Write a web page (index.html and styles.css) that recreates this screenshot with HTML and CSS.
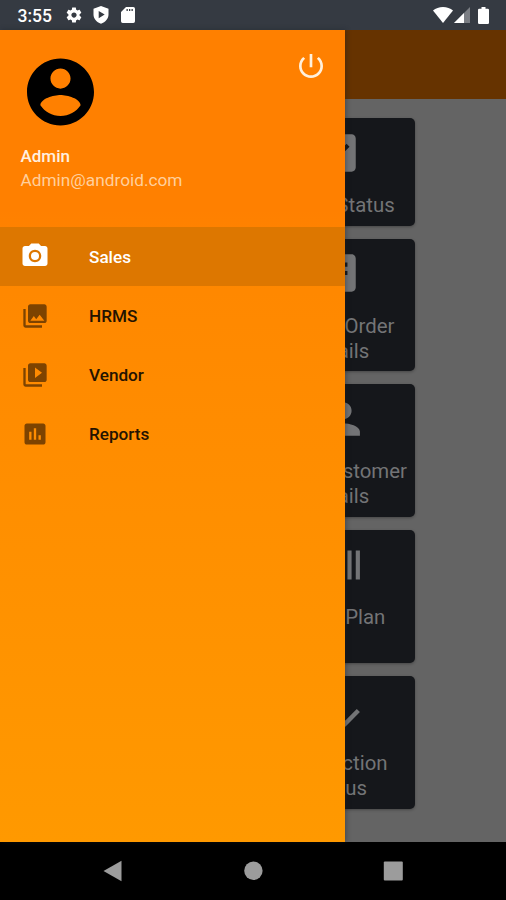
FILE: index.html
```html
<!DOCTYPE html>
<html lang="en">
<head>
<meta charset="utf-8">
<title>Sales</title>
<link rel="stylesheet" href="styles.css">
</head>
<body>
<div class="phone">
  <header class="status-bar">
    <span class="clock">3:55</span>
    <svg class="gear" viewBox="0 0 24 24"><path d="M19.43 12.98c.04-.32.07-.64.07-.98s-.03-.66-.07-.98l2.11-1.65c.19-.15.24-.42.12-.64l-2-3.46c-.12-.22-.39-.3-.61-.22l-2.49 1c-.52-.4-1.08-.73-1.69-.98l-.38-2.65C14.46 2.18 14.25 2 14 2h-4c-.25 0-.46.18-.49.42l-.38 2.65c-.61.25-1.17.59-1.69.98l-2.49-1c-.23-.09-.49 0-.61.22l-2 3.46c-.13.22-.07.49.12.64l2.11 1.65c-.04.32-.07.65-.07.98s.03.66.07.98l-2.11 1.65c-.19.15-.24.42-.12.64l2 3.46c.12.22.39.3.61.22l2.49-1c.52.4 1.08.73 1.69.98l.38 2.65c.03.24.24.42.49.42h4c.25 0 .46-.18.49-.42l.38-2.65c.61-.25 1.17-.59 1.69-.98l2.49 1c.23.09.49 0 .61-.22l2-3.46c.12-.22.07-.49-.12-.64l-2.11-1.65zM12 15.5c-1.93 0-3.5-1.57-3.5-3.5s1.57-3.5 3.5-3.5 3.5 1.57 3.5 3.5-1.57 3.5-3.5 3.5z"/></svg>
    <svg class="shield" viewBox="0 0 16 18"><path fill-rule="evenodd" d="M8 0l7.5 2.8v5.7c0 4.2-3 7.700-7.500 9.300C3.500 16.200.5 12.700.5 8.500V2.800zM5.700 5v7.200l6-3.600z"/></svg>
    <svg class="sdcard" viewBox="0 0 14 16"><path fill-rule="evenodd" d="M5 0h7.300Q14 0 14 1.700v12.600q0 1.700-1.700 1.700H1.700Q0 16 0 14.300V5zM5.500 2v2h1.300V2zM8 2v2h1.300V2zM10.500 2v2h1.300V2z"/></svg>
    <span class="spacer"></span>
    <svg class="wifi" viewBox="0 0 20 16"><path d="M10 16L0 3.600C2.600 1.200 6.200 0 10 0s7.400 1.200 10 3.600z"/></svg>
    <svg class="signal" viewBox="0 0 16 16"><path d="M0 16L16 0v16z" opacity=".35"/><path d="M0 16L10 6v10z"/></svg>
    <svg class="battery" viewBox="0 0 11 17"><path d="M3.500 0h4v1.800h2.300Q11 1.800 11 3v12.800q0 1.200-1.200 1.200H1.200Q0 17 0 15.800V3q0-1.200 1.200-1.200h2.300z"/></svg>
  </header>

  <main class="screen">
    <div class="toolbar"></div>
    <section class="tiles">
      <article class="tile short">
        <svg viewBox="0 0 24 24"><path d="M19 3h-4.180C14.400 1.840 13.300 1 12 1c-1.300 0-2.400.84-2.820 2H5c-1.100 0-2 .9-2 2v14c0 1.100.9 2 2 2h14c1.100 0 2-.9 2-2V5c0-1.100-.9-2-2-2zm-7 0c.55 0 1 .45 1 1s-.45 1-1 1-1-.45-1-1 .45-1 1-1zm-2 14l-4-4 1.410-1.410L10 14.170l6.590-6.590L18 9l-8 8z"/></svg>
        <p>Order Status</p>
      </article>
      <article class="tile">
        <svg viewBox="0 0 24 24"><path d="M19 3h-4.180C14.400 1.840 13.300 1 12 1c-1.300 0-2.400.84-2.820 2H5c-1.100 0-2 .9-2 2v14c0 1.100.9 2 2 2h14c1.100 0 2-.9 2-2V5c0-1.100-.9-2-2-2zm-7 0c.55 0 1 .45 1 1s-.45 1-1 1-1-.45-1-1 .45-1 1-1zm2 14H7v-2h7v2zm3-4H7v-2h10v2zm0-4H7V7h10v2z"/></svg>
        <p>Dealer Order<br>Details</p>
      </article>
      <article class="tile">
        <svg viewBox="0 0 24 24"><path d="M15 12c2.210 0 4-1.790 4-4s-1.790-4-4-4-4 1.790-4 4 1.790 4 4 4zm-9-2V7H4v3H1v2h3v3h2v-3h3v-2H6zm9 4c-2.670 0-8 1.340-8 4v2h16v-2c0-2.660-5.330-4-8-4z"/></svg>
        <p>View Customer<br>Details</p>
      </article>
      <article class="tile">
        <svg viewBox="0 0 24 24"><path d="M21 5v14h2V5h-2zm-4 14h2V5h-2v14zM14 5H2c-.55 0-1 .45-1 1v12c0 .55.45 1 1 1h12c.55 0 1-.45 1-1V6c0-.55-.45-1-1-1z"/></svg>
        <p>Sales Plan</p>
      </article>
      <article class="tile">
        <svg viewBox="0 0 24 24"><path d="M14 10H2v2h12v-2zm0-4H2v2h12V6zM2 16h8v-2H2v2zm19.500-4.500L23 13l-6.990 7-4.510-4.500L13 14l3.010 3 5.490-5.500z"/></svg>
        <p>Production<br>Status</p>
      </article>
    </section>

    <aside class="drawer">
      <div class="profile">
        <div class="profile-top">
          <svg class="avatar" viewBox="2 2 20 20"><path d="M12 2C6.480 2 2 6.480 2 12s4.480 10 10 10 10-4.480 10-10S17.520 2 12 2zm0 3c1.660 0 3 1.340 3 3s-1.340 3-3 3-3-1.340-3-3 1.340-3 3-3zm0 14.200c-2.500 0-4.710-1.280-6-3.220.03-1.990 4-3.080 6-3.080 1.990 0 5.970 1.090 6 3.080-1.290 1.940-3.500 3.220-6 3.220z"/></svg>
          <svg class="power" viewBox="3 3 18 18"><path d="M13 3h-2v10h2V3zm4.830 2.170l-1.420 1.420C17.990 7.860 19 9.810 19 12c0 3.870-3.130 7-7 7s-7-3.130-7-7c0-2.190 1.010-4.140 2.580-5.420L6.170 5.170C4.230 6.820 3 9.260 3 12c0 4.970 4.030 9 9 9s9-4.030 9-9c0-2.740-1.230-5.180-3.170-6.830z"/></svg>
        </div>
        <div class="name">Admin</div>
        <div class="email">Admin@android.com</div>
      </div>
      <nav class="menu">
        <a class="item active"><svg viewBox="0 0 24 24"><circle cx="12" cy="12" r="3.200"/><path d="M9 2L7.170 4H4c-1.100 0-2 .9-2 2v12c0 1.100.9 2 2 2h16c1.100 0 2-.9 2-2V6c0-1.100-.9-2-2-2h-3.170L15 2H9zm3 15c-2.760 0-5-2.240-5-5s2.240-5 5-5 5 2.240 5 5-2.240 5-5 5z"/></svg><span>Sales</span></a>
        <a class="item"><svg viewBox="0 0 24 24"><path d="M22 16V4c0-1.100-.9-2-2-2H8c-1.100 0-2 .9-2 2v12c0 1.100.9 2 2 2h12c1.100 0 2-.9 2-2zm-11-4l2.030 2.710L16 11l4 5H8l3-4zM2 6v14c0 1.100.9 2 2 2h14v-2H4V6H2z"/></svg><span>HRMS</span></a>
        <a class="item"><svg viewBox="0 0 24 24"><path d="M4 6H2v14c0 1.100.9 2 2 2h14v-2H4V6zm16-4H8c-1.100 0-2 .9-2 2v12c0 1.100.9 2 2 2h12c1.100 0 2-.9 2-2V4c0-1.100-.9-2-2-2zm-8 12.500v-9l6 4.500-6 4.500z"/></svg><span>Vendor</span></a>
        <a class="item"><svg viewBox="0 0 24 24"><path d="M19 3H5c-1.100 0-2 .9-2 2v14c0 1.100.9 2 2 2h14c1.100 0 2-.9 2-2V5c0-1.100-.9-2-2-2zM9 17H7v-7h2v7zm4 0h-2V7h2v10zm4 0h-2v-4h2v4z"/></svg><span>Reports</span></a>
      </nav>
    </aside>
  </main>

  <footer class="nav-bar">
    <svg viewBox="0 0 20 22"><path d="M.5 11L18.500 .8v20.400z"/></svg>
    <svg viewBox="0 0 20 22"><circle cx="10.400" cy="10.800" r="9.200"/></svg>
    <svg viewBox="0 0 20 22"><rect x=".8" y="1.500" width="19" height="19" rx="1"/></svg>
  </footer>
</div>
</body>
</html>
```

FILE: styles.css
```css
* { box-sizing: border-box; }

body {
  margin: 0;
  font-family: Roboto, "Liberation Sans", sans-serif;
}

.phone {
  width: 506px;
  height: 900px;
  display: flex;
  flex-direction: column;
  overflow: hidden;
}

svg { display: block; flex: none; }

.status-bar {
  height: 30px;
  flex: none;
  display: flex;
  align-items: center;
  padding: 0 17px 0 17.500px;
  background: #353a42;
  color: #fff;
  fill: #fff;
}

.clock { font-size: 17.500px; font-weight: 500; width: 47.500px; padding-top: 1px; }
.gear { width: 18px; height: 18px; }
.shield { width: 16px; height: 18px; margin-left: 10px; }
.sdcard { width: 14px; height: 16px; margin-left: 12px; }
.spacer { flex: 1; }
.wifi { width: 20px; height: 16px; }
.signal { width: 16px; height: 16px; margin-left: 1px; }
.battery { width: 11px; height: 17px; margin-left: 8px; }

.screen {
  position: relative;
  height: 812px;
  flex: none;
  background: #646464;
}

.toolbar { height: 69px; background: #663300; }

.tiles {
  display: flex;
  flex-direction: column;
  gap: 13px;
  width: 154px;
  margin-left: 261px;
  padding-top: 19px;
}

.tile {
  height: 132.800px;
  padding-top: 9.500px;
  display: flex;
  flex-direction: column;
  align-items: center;
  border-radius: 5px;
  background: #15171b;
  box-shadow: 0 1px 3px rgba(0, 0, 0, .3);
  color: #737476;
  fill: #737476;
}

.tile.short { height: 107.500px; }
.tile svg { width: 50px; height: 50px; margin-right: 2px; }

.tile p {
  margin: 15.500px 0 0;
  font-size: 20.400px;
  line-height: 25px;
  text-align: center;
  white-space: nowrap;
}

.drawer {
  position: absolute;
  top: 0;
  left: 0;
  width: 345px;
  height: 100%;
  background: linear-gradient(#ff8000 0, #ff8000 180px, #ff8800 260px, #ff9900 100%);
  box-shadow: 1px 0 5px rgba(20, 30, 40, .4);
}

.profile { height: 197px; padding: 28px 22.500px 0 20.500px; }

.profile-top {
  display: flex;
  justify-content: space-between;
  align-items: flex-start;
  padding-left: 6px;
  height: 86px;
}

.avatar { width: 67px; height: 68px; fill: #000; }
.power { width: 24px; height: 24px; margin-top: -4px; fill: #fff0dc; }

.name, .email { font-size: 17px; line-height: 24px; }
.name { color: #fff0e0; font-weight: 500; }
.email { color: #ffcf9c; font-size: 17.250px; }

.item {
  height: 59px;
  display: flex;
  align-items: center;
  padding: 0 21px;
  gap: 40px;
  font-size: 17.150px;
  font-weight: 500;
  line-height: 24px;
  color: #241300;
}

.item svg { width: 28px; height: 28px; fill: #7d4300; }
.item span { padding-top: 1px; }
.active { background: #dd7700; color: #fff; }
.active svg { width: 30px; height: 30px; margin: -2px -1px 0 -1px; fill: #fff; }

.nav-bar {
  height: 58px;
  flex: none;
  display: flex;
  justify-content: space-between;
  align-items: center;
  padding: 0 103px;
  background: #000;
  fill: #9c9c9c;
}

.nav-bar svg { width: 20px; height: 22px; }
```
